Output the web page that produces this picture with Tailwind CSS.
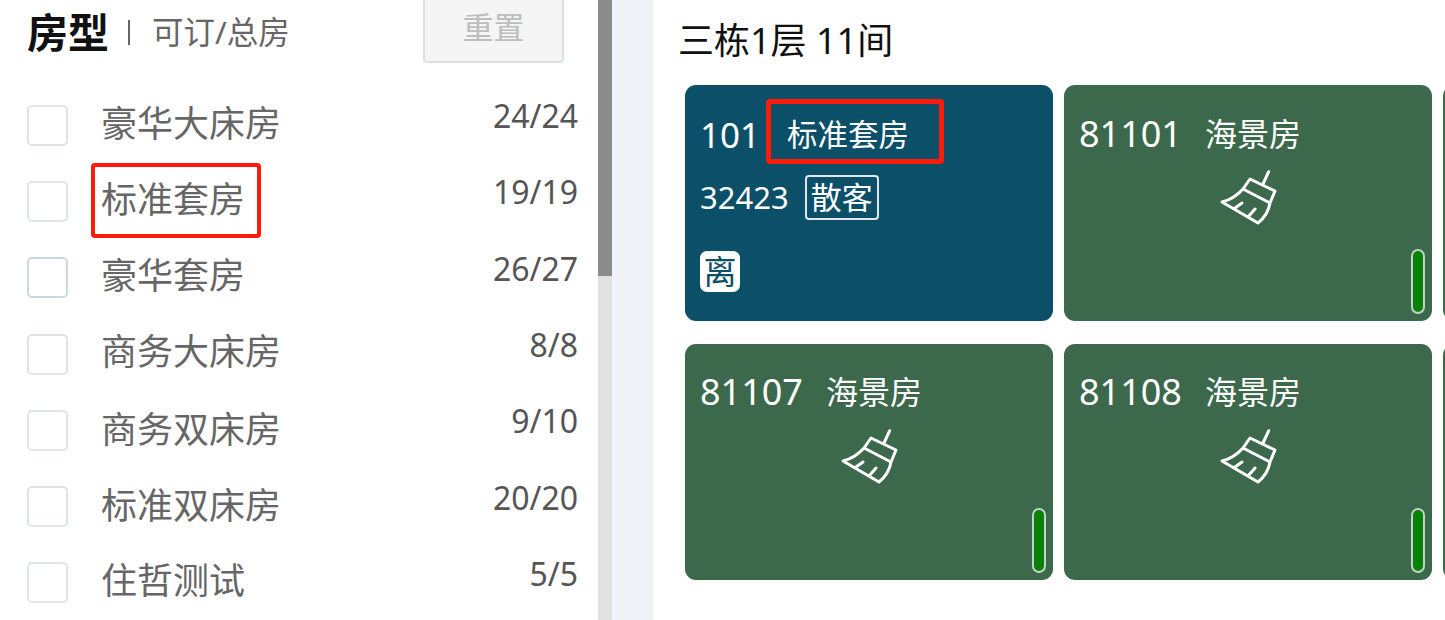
<!DOCTYPE html>
<html lang="zh-CN">
<head>
  <meta charset="UTF-8">
  <title>房态</title>
  <script src="https://cdn.jsdelivr.net/npm/@tailwindcss/browser@4"></script>
</head>
<body class="bg-white">
  <div class="flex h-[620px] w-[1445px] overflow-hidden bg-white font-['Noto_Sans','Noto_Sans_CJK_SC',sans-serif]">
    <!-- room type filter -->
    <aside class="w-[598px] shrink-0 pl-[27px] pr-[20px]">
      <div class="flex h-[87px] items-start justify-between">
        <div class="flex h-[64px] items-center">
          <span class="text-[41px] leading-none font-bold text-[#111]">房型</span>
          <span class="ml-[19px] h-[25px] w-[2px] bg-[#666]"></span>
          <span class="ml-[22px] text-[31.5px] leading-none text-[#666]">可订/总房</span>
        </div>
        <button class="mr-[14px] h-[63px] w-[141px] rounded-b-[4px] border-2 border-t-0 border-[#dcdfe6] bg-[#f5f5f5] pb-[7px] text-[31px] leading-none text-[#bdbdbd]">重置</button>
      </div>
      <ul>
        <li class="flex h-[76.3px] items-center">
          <span class="h-[41px] w-[41px] rounded-[5px] border-2 border-[#e0e3e8]"></span>
          <span class="mt-[-2px] ml-[33px] text-[36px] leading-none text-[#666]">豪华大床房</span>
          <span class="mt-[-18px] ml-auto text-[32px] leading-none text-[#555]">24/24</span>
        </li>
        <li class="flex h-[76.3px] items-center">
          <span class="h-[41px] w-[41px] rounded-[5px] border-2 border-[#e0e3e8]"></span>
          <span class="relative mt-[-2px] ml-[33px] text-[36px] leading-none text-[#666]">
            标准套房
            <span class="absolute top-[-19px] right-[-16px] bottom-[-20px] left-[-10px] rounded-[4px] border-[4px] border-[#ff1a0a]"></span>
          </span>
          <span class="mt-[-18px] ml-auto text-[32px] leading-none text-[#555]">19/19</span>
        </li>
        <li class="flex h-[76.3px] items-center">
          <span class="h-[41px] w-[41px] rounded-[5px] border-2 border-[#c9d8e6]"></span>
          <span class="mt-[-4px] ml-[33px] text-[36px] leading-none text-[#666]">豪华套房</span>
          <span class="mt-[-18px] ml-auto text-[32px] leading-none text-[#555]">26/27</span>
        </li>
        <li class="flex h-[76.3px] items-center">
          <span class="h-[41px] w-[41px] rounded-[5px] border-2 border-[#e0e3e8]"></span>
          <span class="mt-[-4px] ml-[33px] text-[36px] leading-none text-[#666]">商务大床房</span>
          <span class="mt-[-18px] ml-auto text-[32px] leading-none text-[#555]">8/8</span>
        </li>
        <li class="flex h-[76.3px] items-center">
          <span class="h-[41px] w-[41px] rounded-[5px] border-2 border-[#e0e3e8]"></span>
          <span class="mt-[-1px] ml-[33px] text-[36px] leading-none text-[#666]">商务双床房</span>
          <span class="mt-[-18px] ml-auto text-[32px] leading-none text-[#555]">9/10</span>
        </li>
        <li class="flex h-[76.3px] items-center">
          <span class="h-[41px] w-[41px] rounded-[5px] border-2 border-[#e0e3e8]"></span>
          <span class="mt-[-1px] ml-[33px] text-[36px] leading-none text-[#666]">标准双床房</span>
          <span class="mt-[-18px] ml-auto text-[32px] leading-none text-[#555]">20/20</span>
        </li>
        <li class="flex h-[76.3px] items-center">
          <span class="h-[41px] w-[41px] rounded-[5px] border-2 border-[#e0e3e8]"></span>
          <span class="mt-[-4px] ml-[33px] text-[36px] leading-none text-[#666]">住哲测试</span>
          <span class="mt-[-18px] ml-auto text-[32px] leading-none text-[#555]">5/5</span>
        </li>
      </ul>
    </aside>

    <!-- scrollbar -->
    <div class="w-[14px] shrink-0 bg-[#e1e1e1]">
      <div class="h-[276px] bg-[#8c8c8c]"></div>
    </div>
    <div class="w-[41px] shrink-0 bg-[#f1f3f8]"></div>

    <!-- room board -->
    <main class="min-w-0 flex-1 pl-[27px]">
      <h2 class="ml-[-2px] flex h-[85px] items-center pb-[4px] text-[36px] leading-none font-normal text-[#111]">三栋1层 11间</h2>
      <div class="ml-[5px] grid w-[1000px] grid-cols-[368px_368px_368px] gap-x-[11px] gap-y-[23px]">
        <div class="h-[236px] rounded-[11px] bg-[#0c4f69] pt-[28px] pl-[15px] text-white">
          <div class="flex h-[42px] items-center">
            <span class="text-[35px] leading-none">101</span>
            <span class="relative ml-[27px] text-[30.5px] leading-none">
              标准套房
              <span class="absolute top-[-20px] right-[-35px] bottom-[-15px] left-[-21px] rounded-[4px] border-[5px] border-[#ff1a0a]"></span>
            </span>
          </div>
          <div class="mt-[20px] flex items-center">
            <span class="text-[31px] leading-none">32423</span>
            <span class="ml-[16px] rounded-[4px] border-2 border-[#dfe7ea] px-[4px] py-[3px] text-[31px] leading-[35px]">散客</span>
          </div>
          <span class="mt-[31px] flex h-[41px] w-[40px] items-center justify-center rounded-[7px] bg-white text-[33px] leading-none text-[#0c4f69]">离</span>
        </div>

        <div class="relative h-[236px] rounded-[11px] bg-[#3c684c] pt-[28px] pl-[15px] text-white">
          <div class="flex h-[42px] items-center">
            <span class="text-[36px] leading-none">81101</span>
            <span class="ml-[23px] text-[32px] leading-none">海景房</span>
          </div>
          <svg class="mt-[14px] ml-[141px] h-[58px] w-[58px]" viewBox="0 0 58 58" fill="none" stroke="currentColor" stroke-width="3" stroke-linecap="round" stroke-linejoin="round">
            <path d="M48.7 2.7 43 15M30 10l25 12-5 12-27-14zM23 20Q14 30 2 33L38 54Q48 46 50 34M22 34l-7 5M35 40l-7 8"/>
          </svg>
          <span class="absolute right-[7px] bottom-[7px] h-[65px] w-[14px] rounded-full border-2 border-[#c3d2c8] bg-[#078207]"></span>
        </div>

        <div class="h-[236px] rounded-[11px] bg-[#3c684c]"></div>

        <div class="relative h-[236px] rounded-[11px] bg-[#3c684c] pt-[27px] pl-[15px] text-white">
          <div class="flex h-[42px] items-center">
            <span class="text-[36px] leading-none">81107</span>
            <span class="ml-[23px] text-[32px] leading-none">海景房</span>
          </div>
          <svg class="mt-[15px] ml-[141px] h-[58px] w-[58px]" viewBox="0 0 58 58" fill="none" stroke="currentColor" stroke-width="3" stroke-linecap="round" stroke-linejoin="round">
            <path d="M48.7 2.7 43 15M30 10l25 12-5 12-27-14zM23 20Q14 30 2 33L38 54Q48 46 50 34M22 34l-7 5M35 40l-7 8"/>
          </svg>
          <span class="absolute right-[7px] bottom-[7px] h-[65px] w-[14px] rounded-full border-2 border-[#c3d2c8] bg-[#078207]"></span>
        </div>

        <div class="relative h-[236px] rounded-[11px] bg-[#3c684c] pt-[27px] pl-[15px] text-white">
          <div class="flex h-[42px] items-center">
            <span class="text-[36px] leading-none">81108</span>
            <span class="ml-[23px] text-[32px] leading-none">海景房</span>
          </div>
          <svg class="mt-[15px] ml-[141px] h-[58px] w-[58px]" viewBox="0 0 58 58" fill="none" stroke="currentColor" stroke-width="3" stroke-linecap="round" stroke-linejoin="round">
            <path d="M48.7 2.7 43 15M30 10l25 12-5 12-27-14zM23 20Q14 30 2 33L38 54Q48 46 50 34M22 34l-7 5M35 40l-7 8"/>
          </svg>
          <span class="absolute right-[7px] bottom-[7px] h-[65px] w-[14px] rounded-full border-2 border-[#c3d2c8] bg-[#078207]"></span>
        </div>

        <div class="h-[236px] rounded-[11px] bg-[#3c684c]"></div>
      </div>
    </main>
  </div>
</body>
</html>
